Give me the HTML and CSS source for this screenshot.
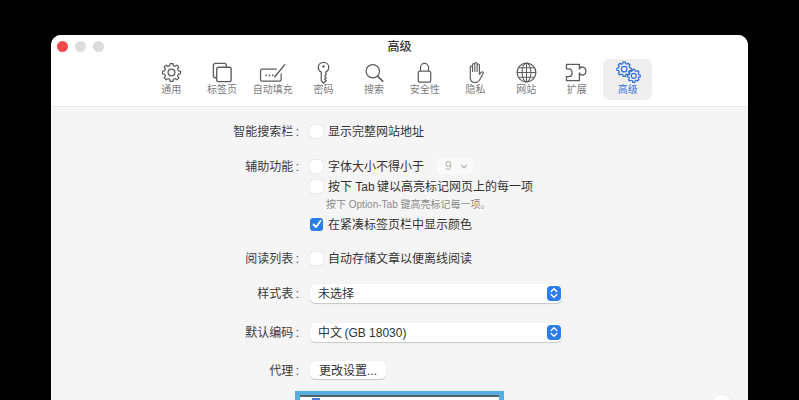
FILE: index.html
```html
<!DOCTYPE html>
<html lang="zh-CN">
<head>
<meta charset="utf-8">
<title>高级</title>
<link rel="stylesheet" href="styles.css">
</head>
<body>
<svg class="defs" width="0" height="0" aria-hidden="true">
  <defs>
    <g id="gear" fill="none" stroke="currentColor" stroke-linejoin="round">
      <path id="tooth" d="M-1.77-7.08L-1.49-9.38H1.49L1.77-7.08A7.3 7.3 0 0 1 3.76-6.26"/>
      <use href="#tooth" transform="rotate(45)"/>
      <use href="#tooth" transform="rotate(90)"/>
      <use href="#tooth" transform="rotate(135)"/>
      <use href="#tooth" transform="rotate(180)"/>
      <use href="#tooth" transform="rotate(225)"/>
      <use href="#tooth" transform="rotate(270)"/>
      <use href="#tooth" transform="rotate(315)"/>
      <circle r="3.6"/>
    </g>
  </defs>
</svg>
<main class="window">
  <header class="toolbar">
    <div class="lights"><span class="light red"></span><span class="light"></span><span class="light"></span></div>
    <h1 class="title">高级</h1>
    <nav class="tabs">
      <div class="tab">
        <svg class="icon" viewBox="0 0 24 24"><use href="#gear" transform="translate(12 12)" stroke-width="1.3"/></svg>
        <span>通用</span>
      </div>
      <div class="tab">
        <svg class="icon" viewBox="0 0 24 24" fill="none" stroke="currentColor" stroke-width="1.4"><path d="M5.5 17.5H4.5A2 2 0 0 1 2.5 15.5V4.5A2 2 0 0 1 4.500 2.500H14A2 2 0 0 1 16 4.500V6"/><rect x="6" y="6.500" width="15" height="15" rx="2"/></svg>
        <span>标签页</span>
      </div>
      <div class="tab">
        <svg class="icon wide" viewBox="0 0 28 24" fill="none" stroke="currentColor" stroke-width="1.3"><path d="M18 8.500H2.500A1.500 1.500 0 0 0 1 10V19.500A1.500 1.500 0 0 0 2.500 21H21A1.500 1.500 0 0 0 22.500 19.500V13"/><path d="M15.500 17L26.500 3.500" stroke-width="1.5"/><path d="M6 15h1.500M9.500 15h1.500M13 15h1.500" stroke-width="1.800"/></svg>
        <span>自动填充</span>
      </div>
      <div class="tab">
        <svg class="icon" viewBox="0 0 24 24" fill="none" stroke="currentColor" stroke-width="1.3"><path d="M12 1.500C8.700 1.500 6.500 3.800 6.500 6.800C6.500 9 7.700 10.700 9.700 11.600V20.500L12 23L14.800 20.500L13.200 19L14.800 17.500L13.200 16L14.800 14.500L14.300 11.600C16.300 10.700 17.500 9 17.500 6.800C17.500 3.800 15.300 1.500 12 1.500Z"/><circle cx="12" cy="5.800" r="1.300" fill="currentColor" stroke="none"/></svg>
        <span>密码</span>
      </div>
      <div class="tab">
        <svg class="icon" viewBox="0 0 24 24" fill="none" stroke="currentColor"><circle cx="10.200" cy="10.700" r="7" stroke-width="1.300"/><path d="M15.400 15.900L20.500 21" stroke-width="1.800" stroke-linecap="round"/></svg>
        <span>搜索</span>
      </div>
      <div class="tab">
        <svg class="icon" viewBox="0 0 24 24" fill="none" stroke="currentColor" stroke-width="1.3"><rect x="5.500" y="10.500" width="13" height="11.500" rx="2"/><path d="M7.800 10.500V6.800A4.200 4.200 0 0 1 16.200 6.800V10.500"/></svg>
        <span>安全性</span>
      </div>
      <div class="tab">
        <svg class="icon" viewBox="0 0 24 24" fill="none" stroke="currentColor" stroke-width="1.2" stroke-linecap="round" stroke-linejoin="round"><path d="M6.500 13V6.500A1.200 1.200 0 0 1 8.900 6.500V11M8.900 11V3.800A1.200 1.200 0 0 1 11.300 3.800V11M11.300 11V2.800A1.200 1.200 0 0 1 13.700 2.800V11M13.700 11V4.300A1.200 1.200 0 0 1 16.100 4.300V14L18 11.800C19 10.700 20.700 11.700 20 13L17 18.500C15.700 21.200 14 22.500 11.500 22.500C8.300 22.500 6.500 20.500 6.500 17V13"/></svg>
        <span>隐私</span>
      </div>
      <div class="tab">
        <svg class="icon" viewBox="0 0 24 24" fill="none" stroke="currentColor" stroke-width="1.100"><circle cx="12" cy="12" r="9.800" stroke-width="1.300"/><ellipse cx="12" cy="12" rx="4.600" ry="9.800"/><path d="M12 2.200V21.800M2.200 12H21.800M3.500 7H20.500M3.500 17H20.500"/></svg>
        <span>网站</span>
      </div>
      <div class="tab">
        <svg class="icon wide" viewBox="0 0 26 24" fill="none" stroke="currentColor" stroke-width="1.400" stroke-linejoin="round"><path d="M2 3.500H15.500V8.300C16 6.800 17.500 6 19 6.300C21 6.700 22.300 8.400 22.300 10.500C22.300 12.700 20.800 14.500 18.800 14.600C17.300 14.700 16 13.900 15.500 12.500V20.500H2V16.300H4.500C6.500 16.300 7.800 14.500 7.800 12.300C7.800 10 6.500 8.200 4.500 8.200H2Z"/></svg>
        <span>扩展</span>
      </div>
      <div class="tab selected">
        <svg class="icon wide" viewBox="0 0 26 24"><use href="#gear" transform="translate(9 8.500) scale(.8)" stroke-width="1.600"/><use href="#gear" transform="translate(19 15.500) scale(.72)" stroke-width="1.700"/></svg>
        <span>高级</span>
      </div>
    </nav>
  </header>

  <section class="form">
    <div class="row first">
      <div class="label">智能搜索栏&#8201;:</div>
      <label class="check"><span class="box"></span>显示完整网站地址</label>
    </div>

    <div class="row gap-15">
      <div class="label">辅助功能&#8201;:</div>
      <div class="check"><span class="box"></span>字体大小不得小于<span class="mini"><span>9</span><svg width="8" height="5" viewBox="0 0 8 5" fill="none" stroke="currentColor" stroke-width="1.200"><path d="M1 1L4 4L7 1"/></svg></span></div>
    </div>
    <div class="row">
      <div class="label"></div>
      <div class="check"><span class="box"></span>按下 Tab&#8201;键以高亮标记网页上的每一项</div>
    </div>
    <div class="row hint-row">
      <div class="label"></div>
      <div class="hint">按下 Option-Tab 键高亮标记每一项。</div>
    </div>
    <div class="row">
      <div class="label"></div>
      <div class="check"><span class="box on"><svg width="10" height="10" viewBox="0 0 10 10" fill="none" stroke="#fff" stroke-width="1.800" stroke-linecap="round" stroke-linejoin="round"><path d="M1.500 5.500L4 8L8.500 2"/></svg></span>在紧凑标签页栏中显示颜色</div>
    </div>

    <div class="row gap-14">
      <div class="label">阅读列表&#8201;:</div>
      <div class="check"><span class="box"></span>自动存储文章以便离线阅读</div>
    </div>

    <div class="row gap-15">
      <div class="label">样式表&#8201;:</div>
      <div class="select"><span>未选择</span><span class="stepper"><svg width="8" height="12" viewBox="0 0 8 12" fill="none" stroke="#fff" stroke-width="1.500" stroke-linecap="round" stroke-linejoin="round"><path d="M1.200 4.500L4 1.800L6.800 4.500M1.200 7.500L4 10.200L6.800 7.500"/></svg></span></div>
    </div>

    <div class="row gap-19">
      <div class="label">默认编码&#8201;:</div>
      <div class="select"><span>中文&#8201;(GB 18030)</span><span class="stepper"><svg width="8" height="12" viewBox="0 0 8 12" fill="none" stroke="#fff" stroke-width="1.500" stroke-linecap="round" stroke-linejoin="round"><path d="M1.200 4.500L4 1.800L6.800 4.500M1.200 7.500L4 10.200L6.800 7.500"/></svg></span></div>
    </div>

    <div class="row gap-18">
      <div class="label">代理&#8201;:</div>
      <div class="button">更改设置...</div>
    </div>

    <div class="popup"><div class="popup-inner"><span class="popup-mark"></span></div></div>
    <div class="help"></div>
  </section>
</main>
</body>
</html>
```

FILE: styles.css
```css
* { box-sizing: border-box; }

html, body {
  margin: 0;
  height: 400px;
  overflow: hidden;
  background: #000;
}

body {
  padding: 35px 51px 0;
  font-family: "Liberation Sans", "Noto Sans CJK SC", sans-serif;
  font-size: 12px;
  color: #333;
}

.defs { position: absolute; }

.window {
  width: 697px;
  height: 365px;
  border-radius: 10px 10px 0 0;
  overflow: hidden;
  background: #f5f5f5;
}

/* Toolbar */
.toolbar {
  position: relative;
  height: 72px;
  background: #fff;
  border-bottom: 1px solid #e6e6e6;
}

.lights {
  position: absolute;
  left: 6px;
  top: 6px;
  display: flex;
  gap: 7px;
}

.light {
  width: 11px;
  height: 11px;
  border-radius: 50%;
  background: #dcdcdc;
}

.light.red { background: #f4484a; }

.title {
  margin: 0;
  padding-top: 4px;
  height: 24px;
  text-align: center;
  font-size: 12px;
  line-height: 17px;
  font-weight: 500;
  color: #333;
}

.tabs {
  display: flex;
  padding-left: 95px;
}

.tab {
  width: 50.7px;
  height: 41px;
  display: flex;
  flex-direction: column;
  align-items: center;
  color: #5c5c5c;
  border-radius: 6px;
}

.tab span {
  font-size: 10px;
  line-height: 12px;
  color: #7b7b7b;
  white-space: nowrap;
}

.icon {
  display: block;
  flex: none;
  width: 23px;
  height: 23px;
  margin-top: 2px;
}

.icon.wide { width: 28px; }

.tab.selected {
  width: 49px;
  margin-left: 1px;
  background: #efefef;
  color: #2f6fd8;
}

.tab.selected span { color: #3b73dc; }

/* Form */
.form {
  position: relative;
  height: 293px;
  padding-top: 14px;
}

.row {
  display: grid;
  grid-template-columns: 248px 1fr;
  column-gap: 11px;
  align-items: center;
  height: 20px;
  font-size: 12px;
  line-height: 18px;
}

.first { margin-top: 0; }
.gap-14 { margin-top: 14px; }
.gap-15 { margin-top: 15px; }
.gap-18 { margin-top: 18px; }
.gap-19 { margin-top: 19px; }

.label {
  height: 20px;
  padding-top: 2px;
  text-align: right;
  color: #3a3a3a;
}

.check {
  display: flex;
  align-items: center;
  height: 20px;
  padding-top: 2px;
  color: #333;
  white-space: nowrap;
}

.box {
  flex: none;
  display: flex;
  align-items: center;
  justify-content: center;
  width: 13px;
  height: 13px;
  margin-top: -2px;
  margin-right: 5px;
  border-radius: 3px;
  background: #fff;
  box-shadow: 0 0 1px rgba(0, 0, 0, .35);
}

.box.on { background: #2b7de9; box-shadow: none; }

.mini {
  display: flex;
  align-items: center;
  justify-content: space-between;
  width: 36px;
  height: 16px;
  margin-top: -2px;
  margin-left: 13px;
  padding: 0 5px 0 8px;
  border-radius: 4px;
  background: #fafafa;
  color: #b5b5b5;
}

.hint-row {
  height: 16px;
  margin-bottom: 2px;
}

.hint-row .label { height: 16px; }

.hint {
  height: 16px;
  padding-top: 1px;
  line-height: 16px;
  margin-left: 16px;
  font-size: 10px;
  color: #8a8a8a;
  white-space: nowrap;
}

.select {
  display: flex;
  align-items: center;
  justify-content: space-between;
  width: 252px;
  height: 19px;
  padding: 2px 1px 0 8px;
  border-radius: 5px;
  background: #fff;
  box-shadow: 0 1px 1px rgba(0, 0, 0, .18), 0 0 1px rgba(0, 0, 0, .15);
  color: #333;
}

.stepper {
  display: flex;
  align-items: center;
  justify-content: center;
  width: 14px;
  height: 15px;
  margin-top: -2px;
  border-radius: 4px;
  background: #2b7de9;
}

.button {
  width: 76px;
  height: 18px;
  padding-top: 1px;
  line-height: 18px;
  text-align: center;
  border-radius: 5px;
  background: #fff;
  box-shadow: 0 1px 1px rgba(0, 0, 0, .18), 0 0 1px rgba(0, 0, 0, .15);
  color: #333;
}

/* Overlays: focused popup and help button, both cut off by the window */
.popup {
  position: absolute;
  left: 244px;
  top: 284px;
  width: 209px;
  height: 40px;
  padding: 4px 5px 0;
  background: #56ade2;
}

.popup-inner {
  height: 100%;
  background: #fff;
  border-top: 2px solid #5a6068;
}

.popup-mark {
  display: block;
  width: 8px;
  height: 4px;
  margin: 1px 0 0 12px;
  background: #4d7fd6;
}

.help {
  position: absolute;
  left: 662px;
  top: 287px;
  width: 18px;
  height: 18px;
  border-radius: 50%;
  background: #fff;
  box-shadow: 0 0 1px rgba(0, 0, 0, .2);
}
```
